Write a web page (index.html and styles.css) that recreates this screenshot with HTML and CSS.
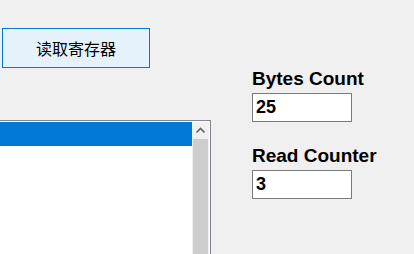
FILE: index.html
```html
<!DOCTYPE html>
<html lang="zh">
    <head>
        <meta charset="utf-8">
        <title>Register Reader</title>
        <link rel="stylesheet" href="styles.css">
    </head>
    <body>
        <div class="form">
            <div class="left">
                <button class="read-btn">读取寄存器</button>
                <div class="listbox">
                    <div class="items">
                        <div class="item selected"></div>
                    </div>
                    <div class="scrollbar">
                        <div class="arrow">
                            <svg width="17" height="17" viewBox="0 0 17 17">
                                <path d="M4.5 10.5 L8.5 6.5 L12.5 10.5" fill="none" stroke="#606060" stroke-width="1.6"/>
                            </svg>
                        </div>
                        <div class="thumb"></div>
                    </div>
                </div>
            </div>
            <div class="right">
                <label class="field-label">Bytes Count</label>
                <input class="field" type="text" value="25">
                <label class="field-label second">Read Counter</label>
                <input class="field" type="text" value="3">
            </div>
        </div>
    </body>
</html>
```

FILE: styles.css
```css
body{
    margin:0;
    background-color:#f0f0f0;
    font-family:"Liberation Sans",Arial,sans-serif;
    overflow:hidden;
}
.form{
    display:flex;
    height:254px;
    overflow:hidden;
}
.left{
    display:flex;
    flex-direction:column;
    padding-top:28px;
    width:252px;
}
.read-btn{
    flex-shrink:0;
    margin-left:2px;
    width:148px;
    height:40px;
    background-color:#e5f1fb;
    border:1px solid #0078d7;
    border-radius:0;
    font-family:"Noto Sans CJK SC",sans-serif;
    font-size:16px;
    color:#000;
    padding:0;
}
.listbox{
    flex-shrink:0;
    margin-top:52px;
    margin-left:-29px;
    width:240px;
    height:160px;
    box-sizing:border-box;
    border:1px solid #828790;
    background-color:#fff;
    padding:1px;
    display:flex;
}
.items{
    flex:1;
}
.item{
    height:24px;
}
.item.selected{
    background-color:#0078d7;
}
.scrollbar{
    width:17px;
    background-color:#f0f0f0;
    display:flex;
    flex-direction:column;
}
.arrow{
    height:17px;
}
.arrow svg{
    display:block;
}
.thumb{
    flex:1;
    margin:0 1px;
    background-color:#cdcdcd;
}
.right{
    display:flex;
    flex-direction:column;
    align-items:flex-start;
    padding-top:68px;
}
.field-label{
    font-weight:bold;
    font-size:19px;
    line-height:22px;
}
.field-label.second{
    margin-top:23px;
}
.field{
    flex-shrink:0;
    margin-top:3px;
    width:100px;
    height:29px;
    box-sizing:border-box;
    border:1px solid #7a7a7a;
    padding:0 3px;
    font-family:"Liberation Sans",Arial,sans-serif;
    font-weight:bold;
    font-size:18px;
    line-height:27px;
    background-color:#fff;
    color:#000;
    outline:none;
}
```
